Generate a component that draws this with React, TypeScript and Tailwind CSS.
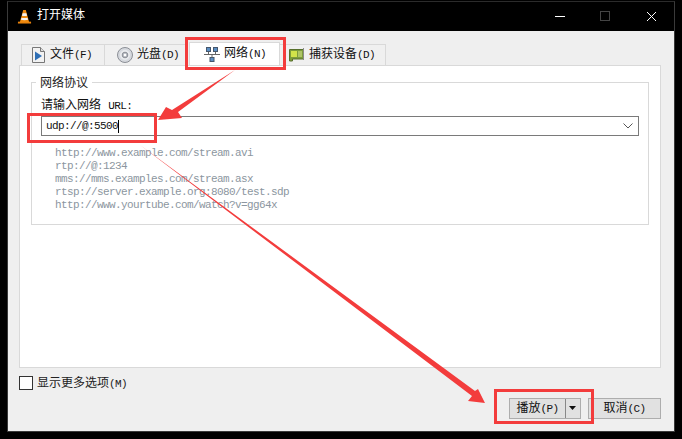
const cjk = "font-['Liberation_Mono','Noto_Sans_CJK_SC',monospace]";
const latin = "text-[11px] tracking-[-0.6px]";

function Cone({ size = 16 }: { size?: number }) {
  return (
    <svg width={size} height={size} viewBox="0 0 16 16">
      <path d="M1 13.500h14v2H1z" fill="#e8820c" />
      <path d="M6.600 1h2.800l3.600 13H3z" fill="#f08a0e" />
      <path d="M6 4.500h4l.7 2.600c-1.600.5-3.800.5-5.400 0zM4.800 9.200c1.800.6 4.600.6 6.400 0l.6 2.200c-2 .7-5.600.7-7.600 0z" fill="#f4f4f4" />
    </svg>
  );
}

function FileIcon() {
  return (
    <svg width="13" height="16" viewBox="0 0 13 16" className="shrink-0">
      <path d="M.5.500h8l4 4v11H.5z" fill="#f2f2f2" stroke="#777" />
      <path d="M8.500.500v4h4" fill="#ddd" stroke="#777" />
      <path d="M3 4.500l7 4.500-7 4.500z" fill="#2f6fb5" />
    </svg>
  );
}

function DiscIcon() {
  return (
    <svg width="16" height="16" viewBox="0 0 16 16" className="shrink-0">
      <circle cx="8" cy="8" r="7.500" fill="#d6d9de" stroke="#8b8f96" />
      <circle cx="8" cy="8" r="5" fill="#e9ebee" />
      <circle cx="8" cy="8" r="2.800" fill="#b9bdc4" stroke="#8b8f96" />
      <circle cx="8" cy="8" r="1.200" fill="#fff" />
    </svg>
  );
}

function NetIcon() {
  return (
    <svg width="16" height="15" viewBox="0 0 16 15" className="shrink-0">
      <rect x="2.500" y="0.500" width="4" height="4" fill="#5b8fc4" stroke="#45566b" />
      <rect x="9.500" y="0.500" width="4" height="4" fill="#5b8fc4" stroke="#45566b" />
      <rect x="6" y="10.500" width="4" height="4" fill="#5b8fc4" stroke="#45566b" />
      <path d="M4.500 5v2.500M11.500 5v2.500M8 7.500v3M0 7.500h16" stroke="#666" fill="none" />
    </svg>
  );
}

function CardIcon() {
  return (
    <svg width="16" height="15" viewBox="0 0 16 15" className="shrink-0">
      <path d="M0.500 1.500h14v9.500h-11v2h-3z" fill="#7d9c3c" stroke="#58702c" />
      <rect x="2" y="3" width="6" height="6" fill="#d2e34a" />
      <path d="M9 4h4M9 6h4M9 8h4" stroke="#dfec8f" />
      <path d="M14.500 0v12" stroke="#8a8a8a" />
    </svg>
  );
}

function Label({ zh, en }: { zh: string; en: string }) {
  return (
    <span className="whitespace-pre text-[12px]">
      {zh}
      <span className={latin}>{en}</span>
    </span>
  );
}

function Tab({
  icon,
  zh,
  en,
  selected,
  className,
}: {
  icon: React.ReactNode;
  zh: string;
  en: string;
  selected?: boolean;
  className: string;
}) {
  return (
    <div
      className={`flex items-center gap-[4px] border border-b-0 border-[#d9d9d9] text-[#111] ${
        selected ? "h-[23px] bg-white" : "h-[21px] bg-[#f0f0f0]"
      } ${className}`}
    >
      {icon}
      <Label zh={zh} en={en} />
    </div>
  );
}

const samples = [
  "http://www.example.com/stream.avi",
  "rtp://@:1234",
  "mms://mms.examples.com/stream.asx",
  "rtsp://server.example.org:8080/test.sdp",
  "http://www.yourtube.com/watch?v=gg64x",
];

export default function App() {
  return (
    <div className={`relative h-[439px] w-[682px] overflow-hidden bg-black pl-[7px] pt-px ${cjk}`}>
      <div className="flex h-[431px] w-[668px] flex-col border border-t-[#2b2b2b] border-x-[#3a3a3a] border-b-[#3a3a3a]">
        <div className="flex h-[29px] shrink-0 items-center bg-black pl-[9px] text-white">
          <Cone size={15} />
          <span className="ml-[5px] flex-1 text-[12px] -mt-px">打开媒体</span>
          <svg width="120" height="29" viewBox="0 0 120 29" className="shrink-0">
            <path d="M1 14.500h10" stroke="#fff" />
            <rect x="46.500" y="9.500" width="9" height="9" fill="none" stroke="#444" />
            <path d="M93 10l9 9M102 10l-9 9" stroke="#fff" />
          </svg>
        </div>
        <div className="flex flex-1 flex-col bg-[#efefef] pl-[11px] pr-[13px] pt-[12px]">
          <div className="flex h-[22px] shrink-0 items-end pl-[2px]">
            <Tab className="w-[84px] pl-[10px] gap-[5px]" icon={<FileIcon />} zh="文件" en="(F)" />
            <Tab className="w-[83px] -ml-px pl-[12px]" icon={<DiscIcon />} zh="光盘" en="(D)" />
            <Tab className="w-[91px] ml-[2px] pl-[14px]" selected icon={<NetIcon />} zh="网络" en="(N)" />
            <Tab className="w-[107px] -ml-px pl-[9px]" icon={<CardIcon />} zh="捕获设备" en="(D)" />
          </div>
          <div className="flex h-[303px] shrink-0 flex-col border border-[#d9d9d9] bg-white px-[11px] pt-[16px]">
            <div className="relative h-[143px] shrink-0 border border-[#d9d9d9] pl-[9px] pr-[9px] pt-[17px]">
              <span className="absolute -top-[6px] left-[4px] bg-white px-[4px] text-[12px] leading-[15px] text-[#222]">
                网络协议
              </span>
              <div className="whitespace-pre text-[12px] leading-[12px] text-[#111]">
                请输入网络 <span className={latin}>URL:</span>
              </div>
              <div className={`mt-[4px] flex h-[20px] items-center border border-[#7a7a7a] pl-[4px] pr-[5px] text-[#111] ${latin}`}>
                <span className="flex-1 leading-[14px]">
                  udp://@:5500
                  <span className="inline-block h-[13px] w-px bg-black align-middle" />
                </span>
                <svg width="10" height="6" viewBox="0 0 10 6">
                  <path d="M.5.500L5 5 9.500.500" fill="none" stroke="#555" />
                </svg>
              </div>
              <div className={`mt-[11px] pl-[14px] leading-[13px] text-[#8c96a0] ${latin}`}>
                {samples.map((s) => (
                  <div key={s}>{s}</div>
                ))}
              </div>
            </div>
          </div>
          <div className="mt-[8px] flex h-[14px] shrink-0 items-center text-[#222]">
            <div className="h-[14px] w-[14px] border border-[#333] bg-white" />
            <span className="ml-[4px]">
              <Label zh="显示更多选项" en="(M)" />
            </span>
          </div>
          <div className="mt-[8px] flex shrink-0 justify-end text-[#111]">
            <div className="flex h-[21px] w-[72px] items-center border border-[#adadad] bg-[#e1e1e1]">
              <span className="flex-1 text-center leading-[19px]">
                <Label zh="播放" en="(P)" />
              </span>
              <span className="h-[19px] w-px bg-[#888]" />
              <svg width="12" height="5" viewBox="0 0 12 5" className="mx-px">
                <path d="M2 0h7L5.500 4z" fill="#111" />
              </svg>
            </div>
            <div className="ml-[7px] flex h-[21px] w-[73px] items-center justify-center border border-[#adadad] bg-[#e1e1e1]">
              <Label zh="取消" en="(C)" />
            </div>
          </div>
        </div>
      </div>
      <svg className="pointer-events-none absolute inset-0" width="682" height="439" viewBox="0 0 682 439">
        <g fill="none" stroke="#f33c3c" strokeWidth="3">
          <rect x="186.500" y="38.500" width="98" height="30" />
          <rect x="28.500" y="114.500" width="127" height="27" />
          <rect x="495.500" y="390.500" width="97" height="32" />
        </g>
        <g fill="#f33c3c">
          <polygon points="235,70 178,112 182,118 158,120 166,107 172,110" />
          <polygon points="140,145 475,391 478,389 485,403 468,401 472,396" />
        </g>
      </svg>
    </div>
  );
}
